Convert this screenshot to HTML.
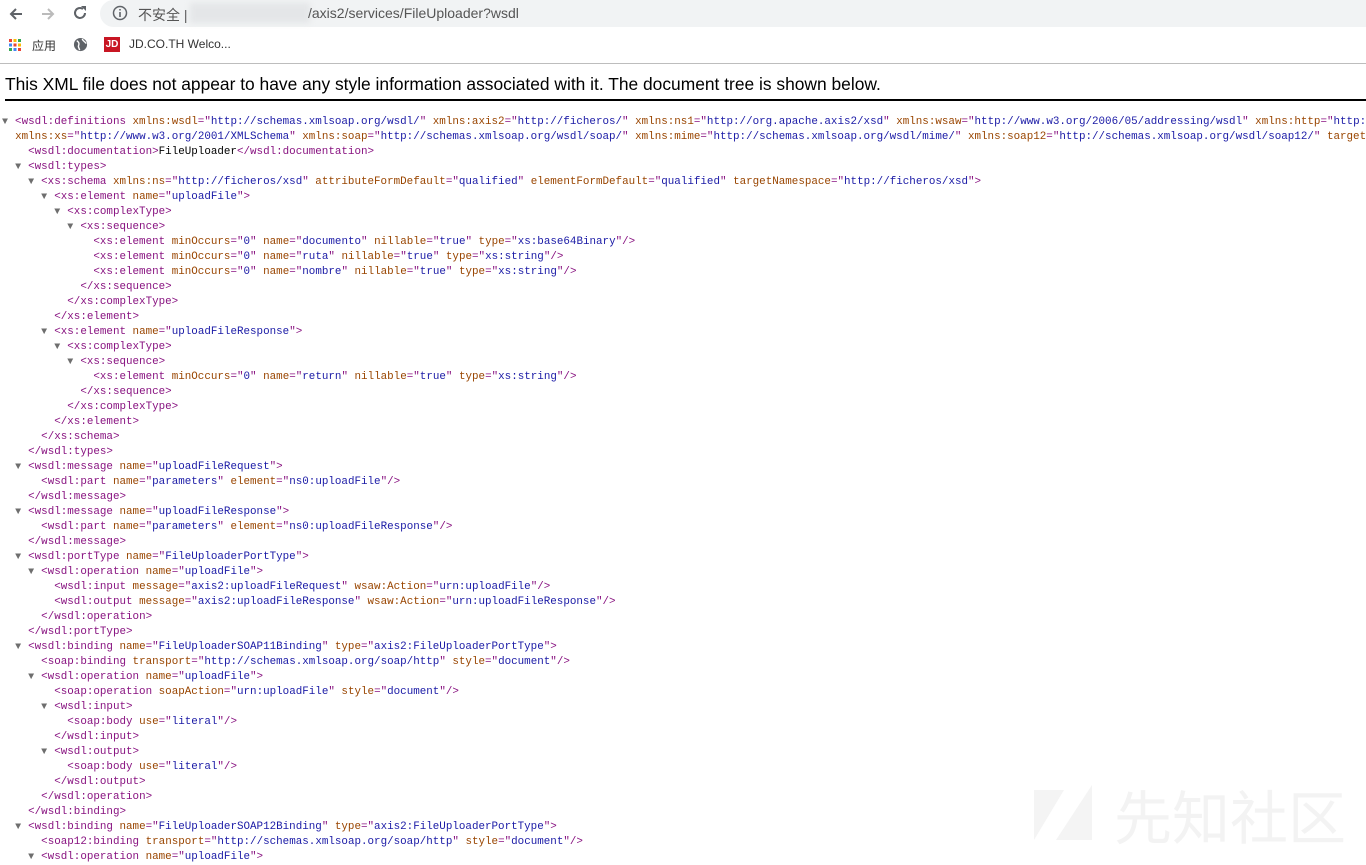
<!DOCTYPE html>
<html><head><meta charset="utf-8"><style>
body{margin:0;width:1366px;height:856px;overflow:hidden;background:#fff;position:relative;font-family:"Liberation Sans","Noto Sans CJK SC",sans-serif}
.top{position:absolute;left:0;top:0;width:1366px;height:63px;border-bottom:1px solid #bdbdbd;background:#fff}
.omni{position:absolute;left:100px;top:0;width:1300px;height:27px;background:#f1f3f4;border-radius:14px}
.url{position:absolute;left:138px;top:5px;font-size:14px;color:#555}
.host{position:absolute;left:190px;top:3px;width:120px;height:20px;background:#e4e6e8;filter:blur(3px)}
.path{position:absolute;left:308px;top:5px;font-size:14px;color:#555}
.bm{position:absolute;top:37px;font-size:12px;color:#333}
.note{position:absolute;left:5px;top:74px;font-size:17.4px;color:#000;white-space:nowrap}
.rule{position:absolute;left:5px;top:99px;width:1361px;height:2px;background:#000}
pre{position:absolute;left:2px;top:115px;margin:0;font-family:"Liberation Mono",monospace;font-size:10.88px;line-height:15px;color:#000;white-space:pre}
.t{color:#881280}.a{color:#994500}.v{color:#1a1aa6}
.x{color:#6e6e6e;font-size:10px;display:inline-block;width:13.06px;text-align:left}
.wm{position:absolute;left:1114px;top:772px;font-size:58px;color:#f3f3f3;font-family:"Noto Sans CJK SC",sans-serif;white-space:nowrap;letter-spacing:0px}
</style></head><body>
<div class="top">
<svg style="position:absolute;left:8px;top:6px" width="16" height="16" viewBox="0 0 16 16"><path d="M14 8H3M8 3L3 8l5 5" stroke="#5f6368" stroke-width="2" fill="none"/></svg>
<svg style="position:absolute;left:40px;top:6px" width="16" height="16" viewBox="0 0 16 16"><path d="M2 8h11M8 3l5 5-5 5" stroke="#bbb" stroke-width="2" fill="none"/></svg>
<svg style="position:absolute;left:72px;top:5px" width="16" height="16" viewBox="0 0 16 16"><path d="M13 8a5 5 0 1 1-2-4" stroke="#5f6368" stroke-width="2" fill="none"/><path d="M9 1h5v5z" fill="#5f6368"/></svg>
<div class="omni"></div>
<svg style="position:absolute;left:112px;top:5px" width="16" height="16" viewBox="0 0 16 16"><circle cx="8" cy="8" r="6.5" stroke="#5f6368" stroke-width="1.5" fill="none"/><path d="M8 7v5M8 4v1.5" stroke="#5f6368" stroke-width="1.6"/></svg>
<div class="url">不安全 |</div><div class="host"></div><div class="path">/axis2/services/FileUploader?wsdl</div>
<svg style="position:absolute;left:9px;top:39px" width="12" height="12" viewBox="0 0 12 12"><g><rect x="0" y="0" width="3" height="3" fill="#ea4335"/><rect x="4.5" y="0" width="3" height="3" fill="#fbbc05"/><rect x="9" y="0" width="3" height="3" fill="#34a853"/><rect x="0" y="4.5" width="3" height="3" fill="#4285f4"/><rect x="4.5" y="4.5" width="3" height="3" fill="#ea4335"/><rect x="9" y="4.5" width="3" height="3" fill="#fbbc05"/><rect x="0" y="9" width="3" height="3" fill="#34a853"/><rect x="4.5" y="9" width="3" height="3" fill="#4285f4"/><rect x="9" y="9" width="3" height="3" fill="#ea4335"/></g></svg>
<div class="bm" style="left:32px">应用</div>
<svg style="position:absolute;left:73px;top:37px" width="15" height="15" viewBox="0 0 16 16"><circle cx="8" cy="8" r="7" fill="#5f6368"/><path d="M4 4c2 1 3 3 2 5s1 3 1 5M10 2c0 2 3 3 4 5" stroke="#fff" stroke-width="1.5" fill="none"/></svg>
<div style="position:absolute;left:104px;top:37px;width:16px;height:15px;background:#c81623;color:#fff;font-size:10px;font-weight:bold;text-align:center;line-height:15px">JD</div>
<div class="bm" style="left:129px">JD.CO.TH Welco...</div>
</div>
<div class="note">This XML file does not appear to have any style information associated with it. The document tree is shown below.</div>
<div class="rule"></div>
<div class="wm">先知社区</div>
<svg style="position:absolute;left:1034px;top:780px" width="60" height="68" viewBox="0 0 60 68"><path d="M0 10h30L0 60z M58 5v55H22z" fill="#f4f4f4"/></svg>
<pre><span class="x">▼</span><span class="t">&lt;wsdl:definitions</span> <span class="a">xmlns:wsdl</span><span class="t">="</span><span class="v">http://schemas.xmlsoap.org/wsdl/</span><span class="t">"</span> <span class="a">xmlns:axis2</span><span class="t">="</span><span class="v">http://ficheros/</span><span class="t">"</span> <span class="a">xmlns:ns1</span><span class="t">="</span><span class="v">http://org.apache.axis2/xsd</span><span class="t">"</span> <span class="a">xmlns:wsaw</span><span class="t">="</span><span class="v">http://www.w3.org/2006/05/addressing/wsdl</span><span class="t">"</span> <span class="a">xmlns:http</span><span class="t">="</span><span class="v">http://</span>
  <span class="a">xmlns:xs</span><span class="t">="</span><span class="v">http://www.w3.org/2001/XMLSchema</span><span class="t">"</span> <span class="a">xmlns:soap</span><span class="t">="</span><span class="v">http://schemas.xmlsoap.org/wsdl/soap/</span><span class="t">"</span> <span class="a">xmlns:mime</span><span class="t">="</span><span class="v">http://schemas.xmlsoap.org/wsdl/mime/</span><span class="t">"</span> <span class="a">xmlns:soap12</span><span class="t">="</span><span class="v">http://schemas.xmlsoap.org/wsdl/soap12/</span><span class="t">"</span> <span class="a">targetNamespace</span>
    <span class="t">&lt;wsdl:documentation&gt;</span>FileUploader<span class="t">&lt;/wsdl:documentation&gt;</span>
  <span class="x">▼</span><span class="t">&lt;wsdl:types&gt;</span>
    <span class="x">▼</span><span class="t">&lt;xs:schema</span> <span class="a">xmlns:ns</span><span class="t">="</span><span class="v">http://ficheros/xsd</span><span class="t">"</span> <span class="a">attributeFormDefault</span><span class="t">="</span><span class="v">qualified</span><span class="t">"</span> <span class="a">elementFormDefault</span><span class="t">="</span><span class="v">qualified</span><span class="t">"</span> <span class="a">targetNamespace</span><span class="t">="</span><span class="v">http://ficheros/xsd</span><span class="t">"&gt;</span>
      <span class="x">▼</span><span class="t">&lt;xs:element</span> <span class="a">name</span><span class="t">="</span><span class="v">uploadFile</span><span class="t">"&gt;</span>
        <span class="x">▼</span><span class="t">&lt;xs:complexType&gt;</span>
          <span class="x">▼</span><span class="t">&lt;xs:sequence&gt;</span>
              <span class="t">&lt;xs:element</span> <span class="a">minOccurs</span><span class="t">="</span><span class="v">0</span><span class="t">"</span> <span class="a">name</span><span class="t">="</span><span class="v">documento</span><span class="t">"</span> <span class="a">nillable</span><span class="t">="</span><span class="v">true</span><span class="t">"</span> <span class="a">type</span><span class="t">="</span><span class="v">xs:base64Binary</span><span class="t">"/&gt;</span>
              <span class="t">&lt;xs:element</span> <span class="a">minOccurs</span><span class="t">="</span><span class="v">0</span><span class="t">"</span> <span class="a">name</span><span class="t">="</span><span class="v">ruta</span><span class="t">"</span> <span class="a">nillable</span><span class="t">="</span><span class="v">true</span><span class="t">"</span> <span class="a">type</span><span class="t">="</span><span class="v">xs:string</span><span class="t">"/&gt;</span>
              <span class="t">&lt;xs:element</span> <span class="a">minOccurs</span><span class="t">="</span><span class="v">0</span><span class="t">"</span> <span class="a">name</span><span class="t">="</span><span class="v">nombre</span><span class="t">"</span> <span class="a">nillable</span><span class="t">="</span><span class="v">true</span><span class="t">"</span> <span class="a">type</span><span class="t">="</span><span class="v">xs:string</span><span class="t">"/&gt;</span>
            <span class="t">&lt;/xs:sequence&gt;</span>
          <span class="t">&lt;/xs:complexType&gt;</span>
        <span class="t">&lt;/xs:element&gt;</span>
      <span class="x">▼</span><span class="t">&lt;xs:element</span> <span class="a">name</span><span class="t">="</span><span class="v">uploadFileResponse</span><span class="t">"&gt;</span>
        <span class="x">▼</span><span class="t">&lt;xs:complexType&gt;</span>
          <span class="x">▼</span><span class="t">&lt;xs:sequence&gt;</span>
              <span class="t">&lt;xs:element</span> <span class="a">minOccurs</span><span class="t">="</span><span class="v">0</span><span class="t">"</span> <span class="a">name</span><span class="t">="</span><span class="v">return</span><span class="t">"</span> <span class="a">nillable</span><span class="t">="</span><span class="v">true</span><span class="t">"</span> <span class="a">type</span><span class="t">="</span><span class="v">xs:string</span><span class="t">"/&gt;</span>
            <span class="t">&lt;/xs:sequence&gt;</span>
          <span class="t">&lt;/xs:complexType&gt;</span>
        <span class="t">&lt;/xs:element&gt;</span>
      <span class="t">&lt;/xs:schema&gt;</span>
    <span class="t">&lt;/wsdl:types&gt;</span>
  <span class="x">▼</span><span class="t">&lt;wsdl:message</span> <span class="a">name</span><span class="t">="</span><span class="v">uploadFileRequest</span><span class="t">"&gt;</span>
      <span class="t">&lt;wsdl:part</span> <span class="a">name</span><span class="t">="</span><span class="v">parameters</span><span class="t">"</span> <span class="a">element</span><span class="t">="</span><span class="v">ns0:uploadFile</span><span class="t">"/&gt;</span>
    <span class="t">&lt;/wsdl:message&gt;</span>
  <span class="x">▼</span><span class="t">&lt;wsdl:message</span> <span class="a">name</span><span class="t">="</span><span class="v">uploadFileResponse</span><span class="t">"&gt;</span>
      <span class="t">&lt;wsdl:part</span> <span class="a">name</span><span class="t">="</span><span class="v">parameters</span><span class="t">"</span> <span class="a">element</span><span class="t">="</span><span class="v">ns0:uploadFileResponse</span><span class="t">"/&gt;</span>
    <span class="t">&lt;/wsdl:message&gt;</span>
  <span class="x">▼</span><span class="t">&lt;wsdl:portType</span> <span class="a">name</span><span class="t">="</span><span class="v">FileUploaderPortType</span><span class="t">"&gt;</span>
    <span class="x">▼</span><span class="t">&lt;wsdl:operation</span> <span class="a">name</span><span class="t">="</span><span class="v">uploadFile</span><span class="t">"&gt;</span>
        <span class="t">&lt;wsdl:input</span> <span class="a">message</span><span class="t">="</span><span class="v">axis2:uploadFileRequest</span><span class="t">"</span> <span class="a">wsaw:Action</span><span class="t">="</span><span class="v">urn:uploadFile</span><span class="t">"/&gt;</span>
        <span class="t">&lt;wsdl:output</span> <span class="a">message</span><span class="t">="</span><span class="v">axis2:uploadFileResponse</span><span class="t">"</span> <span class="a">wsaw:Action</span><span class="t">="</span><span class="v">urn:uploadFileResponse</span><span class="t">"/&gt;</span>
      <span class="t">&lt;/wsdl:operation&gt;</span>
    <span class="t">&lt;/wsdl:portType&gt;</span>
  <span class="x">▼</span><span class="t">&lt;wsdl:binding</span> <span class="a">name</span><span class="t">="</span><span class="v">FileUploaderSOAP11Binding</span><span class="t">"</span> <span class="a">type</span><span class="t">="</span><span class="v">axis2:FileUploaderPortType</span><span class="t">"&gt;</span>
      <span class="t">&lt;soap:binding</span> <span class="a">transport</span><span class="t">="</span><span class="v">http://schemas.xmlsoap.org/soap/http</span><span class="t">"</span> <span class="a">style</span><span class="t">="</span><span class="v">document</span><span class="t">"/&gt;</span>
    <span class="x">▼</span><span class="t">&lt;wsdl:operation</span> <span class="a">name</span><span class="t">="</span><span class="v">uploadFile</span><span class="t">"&gt;</span>
        <span class="t">&lt;soap:operation</span> <span class="a">soapAction</span><span class="t">="</span><span class="v">urn:uploadFile</span><span class="t">"</span> <span class="a">style</span><span class="t">="</span><span class="v">document</span><span class="t">"/&gt;</span>
      <span class="x">▼</span><span class="t">&lt;wsdl:input&gt;</span>
          <span class="t">&lt;soap:body</span> <span class="a">use</span><span class="t">="</span><span class="v">literal</span><span class="t">"/&gt;</span>
        <span class="t">&lt;/wsdl:input&gt;</span>
      <span class="x">▼</span><span class="t">&lt;wsdl:output&gt;</span>
          <span class="t">&lt;soap:body</span> <span class="a">use</span><span class="t">="</span><span class="v">literal</span><span class="t">"/&gt;</span>
        <span class="t">&lt;/wsdl:output&gt;</span>
      <span class="t">&lt;/wsdl:operation&gt;</span>
    <span class="t">&lt;/wsdl:binding&gt;</span>
  <span class="x">▼</span><span class="t">&lt;wsdl:binding</span> <span class="a">name</span><span class="t">="</span><span class="v">FileUploaderSOAP12Binding</span><span class="t">"</span> <span class="a">type</span><span class="t">="</span><span class="v">axis2:FileUploaderPortType</span><span class="t">"&gt;</span>
      <span class="t">&lt;soap12:binding</span> <span class="a">transport</span><span class="t">="</span><span class="v">http://schemas.xmlsoap.org/soap/http</span><span class="t">"</span> <span class="a">style</span><span class="t">="</span><span class="v">document</span><span class="t">"/&gt;</span>
    <span class="x">▼</span><span class="t">&lt;wsdl:operation</span> <span class="a">name</span><span class="t">="</span><span class="v">uploadFile</span><span class="t">"&gt;</span></pre>
</body></html>
